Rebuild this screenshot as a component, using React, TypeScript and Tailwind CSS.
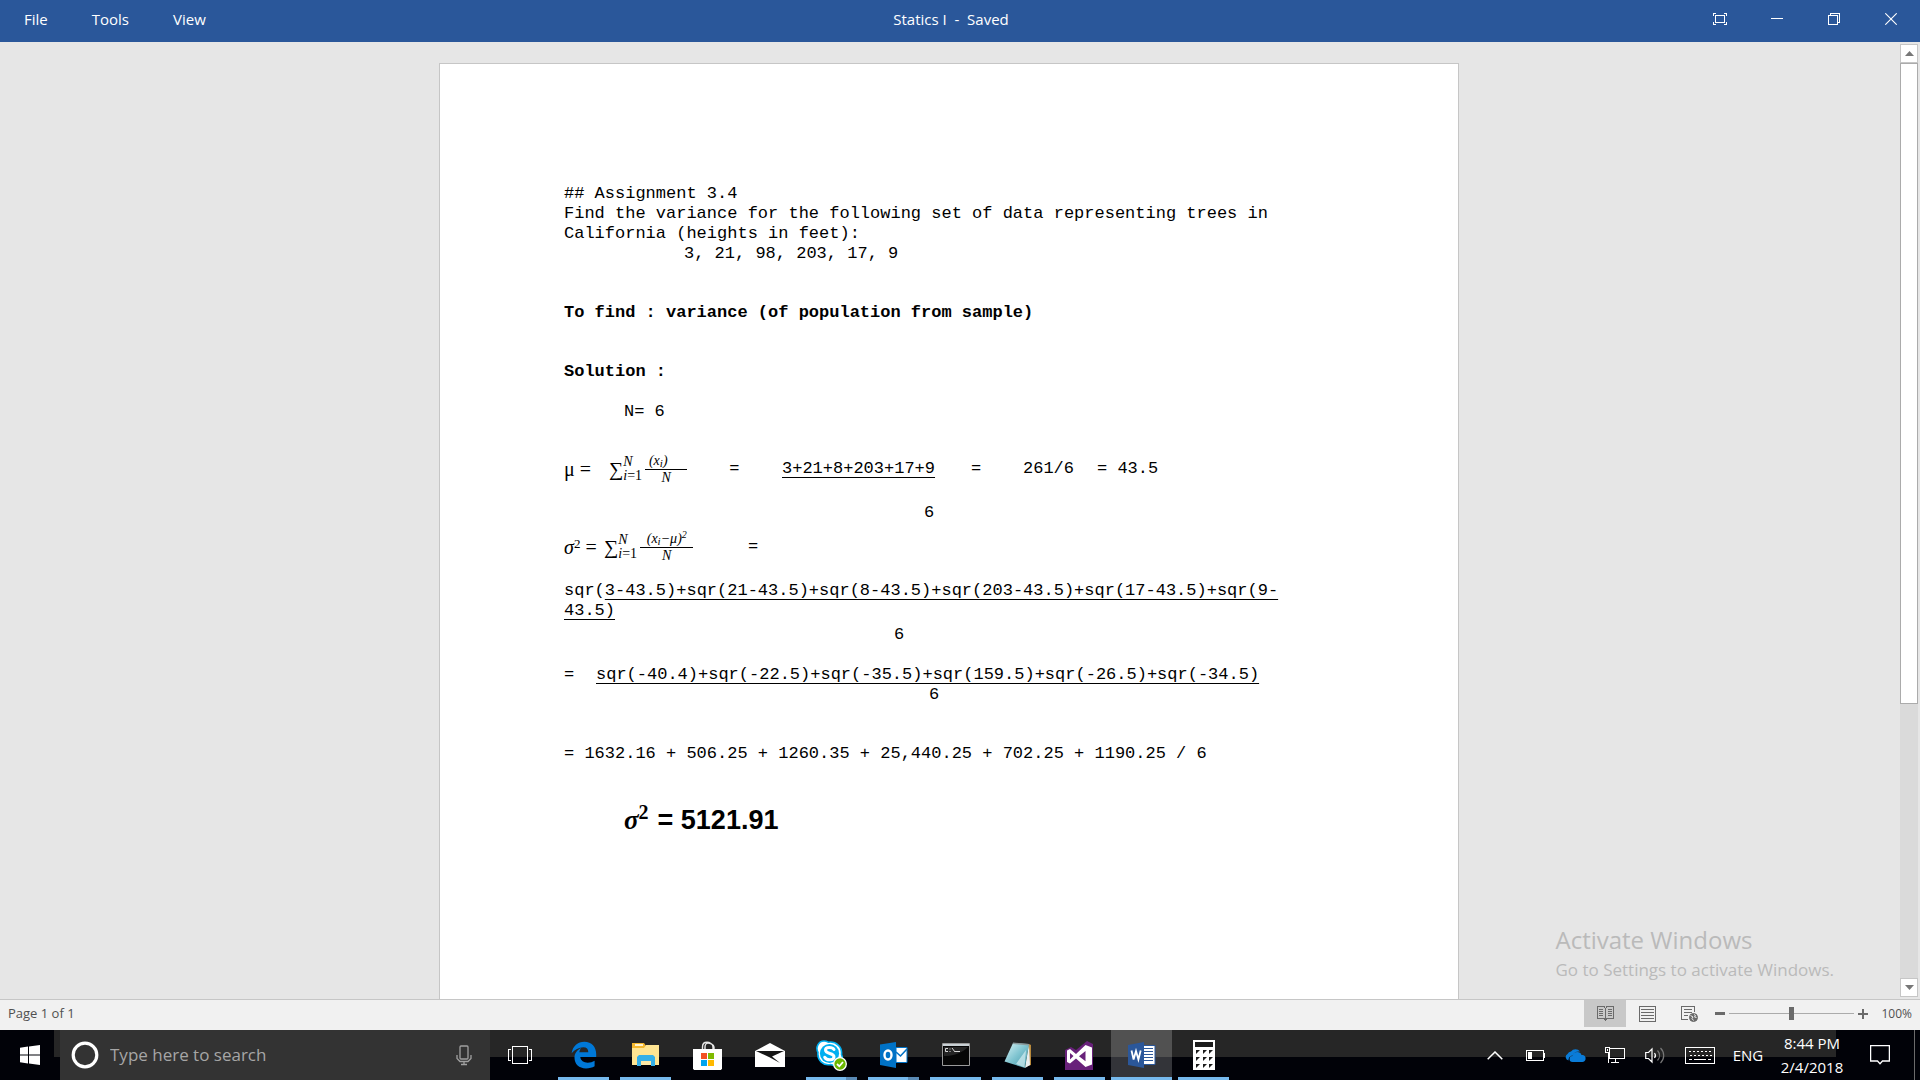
import React from "react";

const mono = "font-['Liberation_Mono',monospace]";
const mathFont = "font-['Liberation_Serif',serif]";

function Caption({ label, children }: { label: string; children: React.ReactNode }) {
  return (
    <button aria-label={label} className="flex h-[38px] w-[57px] items-center justify-center text-white">
      {children}
    </button>
  );
}

function TitleBar() {
  return (
    <header className="grid h-[42px] shrink-0 grid-cols-[1fr_auto_1fr] items-start bg-[#2a579a] text-[15px] leading-5 text-white">
      <nav className="flex gap-11 pt-[9px] pl-6">
        <button>File</button>
        <button>Tools</button>
        <button>View</button>
      </nav>
      <h1 className="pt-[9px] pr-[18px] whitespace-pre">Statics I  -  Saved</h1>
      <div className="flex justify-end pr-px">
        <Caption label="Focus mode">
          <svg width="14" height="12" viewBox="0 0 14 12" fill="none" stroke="currentColor" shapeRendering="crispEdges">
            <path d="M.5 3V.5H3M11 .5h2.500V3M13.500 9v2.500H11M3 11.500H.5V9M2.500 2.500h9v7h-9z" />
          </svg>
        </Caption>
        <Caption label="Minimize">
          <svg width="12" height="12" viewBox="0 0 12 12" fill="currentColor">
            <path d="M0 5h12v1H0z" />
          </svg>
        </Caption>
        <Caption label="Restore">
          <svg width="12" height="12" viewBox="0 0 12 12" fill="none" stroke="currentColor" shapeRendering="crispEdges">
            <path d="M.5 2.500h9v9h-9zM2.500 2V.5h9v9H10" />
          </svg>
        </Caption>
        <Caption label="Close">
          <svg width="12" height="12" viewBox="0 0 12 12" fill="none" stroke="currentColor" strokeWidth="1.100">
            <path d="M.3.3l11.400 11.400M11.700.3L.3 11.700" />
          </svg>
        </Caption>
      </div>
    </header>
  );
}

function SumLimits() {
  return (
    <span className="flex items-center">
      <span className="text-[20px] leading-6">∑</span>
      <span className="flex w-[22px] flex-col text-[14px] leading-[14px]">
        <i>N</i>
        <span>
          <i>i</i>=1
        </span>
      </span>
    </span>
  );
}

function Document() {
  return (
    <article className={`h-full w-[1020px] shrink-0 border border-b-0 border-[#c6c6c6] bg-white pt-[120px] pl-[124px] text-[17px] leading-5 text-black ${mono}`}>
      <p>## Assignment 3.4</p>
      <p>
        Find the variance for the following set of data representing trees in
        <br />
        California (heights in feet):
      </p>
      <p className="pl-[120px]">3, 21, 98, 203, 17, 9</p>
      <h2 className="mt-[39px] font-bold">To find : variance (of population from sample)</h2>
      <h2 className="mt-[39px] font-bold">Solution :</h2>
      <p className="mt-5 pl-[60px]">N= 6</p>

      <div className="mt-[27px] flex h-10 items-center">
        <span className={`flex w-[218px] items-center ${mathFont}`}>
          <span className="w-[45px] text-[20px]">μ =</span>
          <SumLimits />
          <span className="flex flex-col text-center text-[14px] leading-4 italic">
            <span className="w-[42px] border-b border-black pr-4">
              (x<sub className="text-[11px]">i</sub>)
            </span>
            <span>N</span>
          </span>
          <span className={`ml-[42px] text-[17px] ${mono}`}>=</span>
        </span>
        <span className="w-[189px] underline underline-offset-4">3+21+8+203+17+9</span>
        <span className="w-[52px]">=</span>
        <span className="w-[74px]">261/6</span>
        <span className="whitespace-pre">= 43.5</span>
      </div>
      <p className="mt-[14px] pl-[360px]">6</p>

      <div className="mt-1 flex h-10 items-center">
        <span className={`flex w-[184px] items-center ${mathFont}`}>
          <span className="w-10 text-[20px] whitespace-nowrap">
            <i>σ</i>
            <sup className="text-[13px]">2</sup> =
          </span>
          <SumLimits />
          <span className="flex flex-col text-center text-[14px] leading-4 italic">
            <span className="w-[53px] border-b border-black">
              (x<sub className="text-[11px]">i</sub>−μ)<sup className="text-[10px]">2</sup>
            </span>
            <span>N</span>
          </span>
        </span>
        <span>=</span>
      </div>

      <p className="mt-[14px]">
        sqr(<span className="underline underline-offset-4">3-43.5)+sqr(21-43.5)+sqr(8-43.5)+sqr(203-43.5)+sqr(17-43.5)+sqr(9-</span>
        <br />
        <span className="underline underline-offset-4">43.5)</span>
      </p>
      <p className="mt-1 pl-[330px]">6</p>
      <p className="mt-5 flex">
        <span className="w-8">=</span>
        <span className="underline underline-offset-4">sqr(-40.4)+sqr(-22.5)+sqr(-35.5)+sqr(159.5)+sqr(-26.5)+sqr(-34.5)</span>
      </p>
      <p className="pl-[365px]">6</p>
      <p className="mt-[39px]">= 1632.16 + 506.25 + 1260.35 + 25,440.25 + 702.25 + 1190.25 / 6</p>
      <p className="mt-8 flex items-center gap-[9px] pl-[60px] font-['Liberation_Sans',sans-serif] text-[27px] leading-[48px] font-bold">
        <span className={`${mathFont} leading-8`}>
          <i>σ</i>
          <sup className="text-[20px]">2</sup>
        </span>
        = 5121.91
      </p>
    </article>
  );
}

function ScrollBar() {
  return (
    <div className="flex w-5 shrink-0 flex-col pt-0.5 pr-0.5 pb-0.5">
      <button aria-label="Scroll up" className="flex h-[19px] items-center justify-center border border-[#c6c6c6] bg-white">
        <svg width="9" height="5" viewBox="0 0 9 5" fill="#777">
          <path d="M4.500 0L9 5H0z" />
        </svg>
      </button>
      <div className="grow bg-[#dadada]">
        <div className="h-[70%] border border-[#ababab] bg-white" />
      </div>
      <button aria-label="Scroll down" className="flex h-[19px] items-center justify-center border border-[#c6c6c6] bg-white">
        <svg width="9" height="5" viewBox="0 0 9 5" fill="#777">
          <path d="M4.500 5L9 0H0z" />
        </svg>
      </button>
    </div>
  );
}

function StatusBar() {
  return (
    <footer className="flex h-[31px] shrink-0 items-start border-t border-[#c6c6c6] bg-[#f1f1f1] pr-2 text-[12px] text-[#505050]">
      <span className="grow pl-2 text-[13px] leading-[27px]">Page 1 of 1</span>
      <button aria-label="Read mode" className="flex h-[27px] w-[42px] items-center justify-center bg-[#c8c8c8]">
        <svg width="17" height="15" viewBox="0 0 17 15" fill="none" stroke="#6a6a6a" shapeRendering="crispEdges">
          <path d="M8.500 2.500L7 .5H.5v12H7l1.500 2L10 12.500h6.500V.5H10zM8.500 2v12M2 3.500h4M2 5.500h4M2 7.500h4M2 9.500h4M11 3.500h4M11 5.500h4M11 7.500h4M11 9.500h4" />
        </svg>
      </button>
      <button aria-label="Print layout" className="flex h-[27px] w-[42px] items-center justify-center">
        <svg width="17" height="16" viewBox="0 0 17 16" fill="none" stroke="#6a6a6a" shapeRendering="crispEdges">
          <path d="M.5.5h16v15H.5zM2 3.500h13M2 6.500h13M2 9.500h13M2 12.500h13" />
        </svg>
      </button>
      <button aria-label="Web layout" className="flex h-[27px] w-[43px] items-center justify-center">
        <svg width="17" height="16" viewBox="0 0 17 16" fill="none" stroke="#6a6a6a">
          <path d="M7 13.500H.5V.5h13V6M3 3.500h8M3 6.500h8M3 9.500h4" shapeRendering="crispEdges" />
          <circle cx="12.500" cy="11.500" r="4" fill="#6a6a6a" />
          <path d="M9.500 9.500l2.500 1.500-1 1.500 1.500 2M13 8.500l1.500 1-1 1.500 2 .5" stroke="#f1f1f1" />
        </svg>
      </button>
      <div className="flex h-[27px] items-center">
        <button aria-label="Zoom out" className="flex w-[18px] justify-center">
          <svg width="10" height="10" viewBox="0 0 10 10" fill="#6a6a6a">
            <path d="M0 3h10v3H0z" />
          </svg>
        </button>
        <input
          type="range"
          aria-label="Zoom"
          min="0"
          max="200"
          defaultValue="100"
          className="h-[13px] w-[125px] appearance-none bg-[linear-gradient(#ababab,#ababab)] bg-[length:100%_1px] bg-center bg-no-repeat [&::-webkit-slider-thumb]:h-[13px] [&::-webkit-slider-thumb]:w-[5px] [&::-webkit-slider-thumb]:appearance-none [&::-webkit-slider-thumb]:bg-[#6a6a6a]"
        />
        <button aria-label="Zoom in" className="flex w-[18px] justify-center">
          <svg width="10" height="10" viewBox="0 0 10 10" fill="#6a6a6a">
            <path d="M0 4h10v2H0zM4 0h2v10H4z" />
          </svg>
        </button>
        <span className="w-10 text-right">100%</span>
      </div>
    </footer>
  );
}

type AppProps = { label: string; state?: "open" | "stacked" | "active"; children: React.ReactNode };

function TaskApp({ label, state, children }: AppProps) {
  return (
    <button
      aria-label={label}
      className={`flex h-[50px] w-[61px] flex-col items-center ${state === "active" ? "bg-white/20" : ""}`}
    >
      <span className="flex grow items-center pt-[3px]">{children}</span>
      {state === "open" && <span className="h-[3px] w-[51px] bg-[#76b9ed]" />}
      {state === "active" && <span className="h-[3px] w-full bg-[#76b9ed]" />}
      {state === "stacked" && (
        <span className="flex h-[3px] w-[51px]">
          <span className="w-10 bg-[#76b9ed]" />
          <span className="grow bg-[#5a8ab5]" />
        </span>
      )}
      {!state && <span className="h-[3px]" />}
    </button>
  );
}

function Taskbar() {
  return (
    <div className="flex h-[50px] shrink-0 items-center bg-[#010208] bg-[linear-gradient(#262626,#262626)] bg-[length:calc(100%-138px)_27px] bg-[position:54px_0px] bg-no-repeat text-white">
      <button aria-label="Start" className="flex h-[50px] w-[60px] items-center justify-center">
        <svg width="20" height="20" viewBox="0 0 20 20" fill="#fff">
          <path d="M0 2.700L8 1.600V9.500H0zM9 1.400L20 0V9.500H9zM0 10.500H8V18.400L0 17.300zM9 10.500H20V20L9 18.600z" />
        </svg>
      </button>
      <div className="flex h-[50px] w-[430px] items-center bg-[#333] pr-[18px] pl-[11px]">
        <svg width="28" height="28" viewBox="0 0 28 28" fill="none" stroke="#fff" strokeWidth="3.200">
          <circle cx="14" cy="14" r="11.800" />
        </svg>
        <input
          type="text"
          aria-label="Search"
          placeholder="Type here to search"
          className="ml-[11px] min-w-0 grow bg-transparent text-[17px] placeholder:text-[#a6a6a6]"
        />
        <button aria-label="Speak">
          <svg width="16" height="21" viewBox="0 0 16 21" fill="none" stroke="#a0a0a0" strokeWidth="1.300">
            <rect x="4" y="1" width="8" height="13" rx="1" />
            <path d="M1 10v3.500l3 3h8l3-3V10M8 16.500V20M5 19.500h6" />
          </svg>
        </button>
      </div>
      <button aria-label="Task view" className="mr-[3px] flex h-[50px] w-[60px] items-center justify-center">
        <svg width="24" height="18" viewBox="0 0 24 18" fill="none" stroke="#fff" shapeRendering="crispEdges">
          <path d="M4.500.5h15v17h-15zM3 3.500H.5v11H3M21 3.500h2.500v11H21" />
        </svg>
      </button>
      <div className="flex gap-px">
        <TaskApp label="Microsoft Edge" state="open">
          <svg width="26" height="28" viewBox="0 0 26 28" fill="#0078d7">
            <path d="M.6 12.300C1.800 5 6.800.8 13.300.8c7.500 0 11.900 5.400 11.900 12.100v3.200H9.300c.3 3.600 3.500 5.600 7.400 5.600 2.600 0 4.900-.7 6.900-1.900v5.500c-2.300 1.400-5.300 2.100-8.600 2.100-7 0-11.500-4.200-11.500-10.600 0-4.500 2.600-8 6.600-9.800-1 1.200-1.500 2.700-1.700 4.200h8.900c0-3.300-1.600-5-5-5-4.400 0-8.600 2.400-11.700 6.100z" />
          </svg>
        </TaskApp>
        <TaskApp label="File Explorer" state="open">
          <svg width="28" height="26" viewBox="0 0 28 26">
            <path d="M0 1h12l2 3v4H0z" fill="#f5b82e" />
            <path d="M3 2h8v2H3z" fill="#fff3cf" />
            <path d="M0 6h12l2-3h13v20H0z" fill="#ffe592" />
            <path d="M5 24V15l2-2h14l2 2v9h-4v-5H9v5z" fill="#35b0e8" />
            <path d="M9 19h10v4H9z" fill="#ffe9a6" />
          </svg>
        </TaskApp>
        <TaskApp label="Store">
          <svg width="29" height="29" viewBox="0 0 29 29">
            <path d="M9.500 9V6c0-3 2-4.700 4.500-4.700S20 3 20 6v3M12 9V6c0-3 2-4 3-4s6 1 6 4v3" fill="none" stroke="#e8e8e8" strokeWidth="1.400" />
            <path d="M0 8h29v19.500L28 29H1L0 27.500z" fill="#fff" />
            <path d="M8 12h6v6H8z" fill="#f25022" />
            <path d="M15 12h6v6h-6z" fill="#7fba00" />
            <path d="M8 19h6v6H8z" fill="#00a4ef" />
            <path d="M15 19h6v6h-6z" fill="#ffb900" />
          </svg>
        </TaskApp>
        <TaskApp label="Mail">
          <svg width="30" height="24" viewBox="0 0 30 24">
            <path d="M0 8L15 0l15 8v16H0z" fill="#fff" />
            <path d="M1 8h28l-12 5.500 8 6.500L14 14z" fill="#161616" />
          </svg>
        </TaskApp>
        <TaskApp label="Skype" state="stacked">
          <svg width="31" height="31" viewBox="0 0 31 31">
            <path d="M8 1c2 0 3 .4 4.500 1.200C20 1 26.500 7 25.500 14.500c2.500 5-1 11-6.500 11-2 0-3-.5-4.500-1C7 26 1 20 2 12.500-.8 7.500 2.500 1 8 1z" fill="#fff" stroke="#00aff0" strokeWidth="1.600" />
            <circle cx="13.500" cy="13.500" r="9.600" fill="#00aff0" />
            <path d="M18 9.500c-1.500-2.500-8.500-3-8.500.5 0 4.500 8.500 2.500 8.500 6.800 0 4-7.500 4-9.300.5" fill="none" stroke="#fff" strokeWidth="3" strokeLinecap="round" />
            <circle cx="24" cy="24" r="6.300" fill="#6bb700" stroke="#fff" strokeWidth="1.300" />
            <path d="M21 24l2.300 2.300L27 22" fill="none" stroke="#fff" strokeWidth="1.800" />
          </svg>
        </TaskApp>
        <TaskApp label="Outlook" state="stacked">
          <svg width="28" height="28" viewBox="0 0 28 28">
            <path d="M16 6.500h11v15H16z" fill="#fff" stroke="#0072c6" />
            <path d="M16 11l4.500 4L27 8" fill="none" stroke="#0072c6" strokeWidth="1.600" />
            <path d="M0 3.500L16 1v26L0 24z" fill="#0072c6" />
            <ellipse cx="8" cy="14" rx="3.500" ry="4.500" fill="none" stroke="#fff" strokeWidth="2.400" />
          </svg>
        </TaskApp>
        <TaskApp label="Command Prompt" state="open">
          <svg width="28" height="24" viewBox="0 0 28 24">
            <path d="M.5.5h27v22H.5z" fill="#060606" stroke="#9a9a9a" />
            <path d="M1 1h26v2H1z" fill="#c9d0d4" />
            <path d="M2 13V4h24C18 12 8 13 2 13z" fill="#252525" />
            <path d="M6 5.500H3.500v3H6M8 5.500v1M8 8v1M10 5l3 4M13 8.500h5" fill="none" stroke="#d8d8d8" />
          </svg>
        </TaskApp>
        <TaskApp label="Notepad" state="open">
          <svg width="28" height="28" viewBox="0 0 28 28">
            <defs>
              <linearGradient id="pad" x1="0" y1="0" x2="1" y2="1">
                <stop offset="0" stopColor="#d9f3f6" />
                <stop offset=".5" stopColor="#7fc4d0" />
                <stop offset="1" stopColor="#3f93a6" />
              </linearGradient>
            </defs>
            <path d="M25 3l2 1v20l-6 2z" fill="#b98a3c" />
            <path d="M25 3l-4 24 5-3z" fill="#e9eef0" />
            <path d="M9 2l16 1-4 24L.5 20.500z" fill="url(#pad)" />
            <path d="M12 23L22 9l-1.500 17.500z" fill="#dff5f7" opacity=".65" />
            <path d="M9 1.500l16 1.500v1.500L9 3z" fill="#8a9a9c" />
          </svg>
        </TaskApp>
        <TaskApp label="Visual Studio" state="open">
          <svg width="29" height="31" viewBox="0 0 29 31">
            <path d="M0 10l6-3 5 3L22 1l6 3v26H0z" fill="#68217a" />
            <path d="M2 10.500l3-1.500 6 5 9.500-9L27 7.500v17L20.500 27 11 18.500l-6 5-3-1.500zM5 13v6.500L8.500 16zM20.500 11L14 16.200l6.500 5z" fill="#fff" fillRule="evenodd" />
          </svg>
        </TaskApp>
        <TaskApp label="Word" state="active">
          <svg width="28" height="28" viewBox="0 0 28 28">
            <path d="M15 4.500h12v19H15z" fill="#fff" stroke="#2b579a" />
            <path d="M16 7.500h9M16 10.500h9M16 13.500h9M16 16.500h9M16 19.500h9" stroke="#2b579a" strokeWidth="1.200" />
            <path d="M0 4L16 1v26L0 24z" fill="#2b579a" />
            <path d="M3.500 9.500L5.600 18.500 8 10l2.400 8.500 2.300-9" fill="none" stroke="#fff" strokeWidth="1.800" />
          </svg>
        </TaskApp>
        <TaskApp label="Calculator" state="open">
          <svg width="22" height="30" viewBox="0 0 22 30">
            <path d="M0 0h22v30H0z" fill="#fff" />
            <path d="M2 2h18v5H2zM3 10h4l-4 4zM10 10h4l-4 4zM16 10h4l-4 4zM3 17h4l-4 4zM10 17h4l-4 4zM16 17h4l-4 4zM3 24h4l-4 4zM10 24h4l-4 4zM16 24h4l-4 4z" fill="#1c1c1c" />
          </svg>
        </TaskApp>
      </div>

      <div className="ml-auto flex h-[50px] items-center">
        <button aria-label="Show hidden icons" className="flex w-10 justify-center">
          <svg width="16" height="9" viewBox="0 0 16 9" fill="none" stroke="#fff" strokeWidth="1.500">
            <path d="M.7 8.300L8 1l7.300 7.300" />
          </svg>
        </button>
        <button aria-label="Battery" className="flex w-10 justify-center">
          <svg width="19" height="11" viewBox="0 0 19 11" shapeRendering="crispEdges">
            <path d="M.5.5h17v10H.5zM18.500 3v5" fill="none" stroke="#fff" />
            <path d="M2 2h4v7H2z" fill="#fff" />
          </svg>
        </button>
        <button aria-label="OneDrive" className="flex w-10 justify-center">
          <svg width="21" height="13" viewBox="0 0 21 13" fill="#0a7cd8">
            <path d="M3.500 11.500A3.500 3.500 0 0 1 2.500 5 5 5 0 0 1 6 2.500 5.500 5.500 0 0 1 15 2.500C11 2 8.500 4 8 6.500 5 6.500 3.500 9 3.500 11.500z" />
            <path d="M7.500 13a3 3 0 0 1 0-6c.5-4.500 7.500-5.500 9-1 3.500 0 4.500 2 4 4.500-.5 1.500-1.500 2.500-3 2.500z" />
          </svg>
        </button>
        <button aria-label="Network" className="flex w-10 justify-center">
          <svg width="20" height="17" viewBox="0 0 20 17" fill="none" stroke="#fff" shapeRendering="crispEdges">
            <path d="M5 1.500h14.500v10H4.500V6M.5.5h4v5h-4zM2.500 2v2M3.500 6v9.500M6 15.500h8M10.500 12v3" />
          </svg>
        </button>
        <button aria-label="Volume" className="flex w-10 justify-center">
          <svg width="20" height="17" viewBox="0 0 20 17" fill="none" stroke="#fff" strokeWidth="1.200">
            <path d="M.7 5.500h2.800L7 2v13l-3.500-3.500H.7zM9.500 6c1.200 1.500 1.200 3.500 0 5" />
            <path d="M12.500 3.500c2.700 3 2.700 7 0 10M15.500 1c4.300 4.500 4.300 10.500 0 15" stroke="#777" />
          </svg>
        </button>
        <button aria-label="Touch keyboard" className="flex w-[50px] justify-center">
          <svg width="30" height="17" viewBox="0 0 30 17" fill="none" stroke="#fff" shapeRendering="crispEdges">
            <path d="M.5.5h29v16H.5z" />
            <path d="M4 4.500h22M5 8.500h22" strokeDasharray="2 2" />
            <path d="M4 12.500h3M9 12.500h12M23 12.500h3" />
          </svg>
        </button>
        <button className="w-[46px] text-center text-[15px]">ENG</button>
        <div className="w-[82px] text-center text-[15px] leading-6">
          <time dateTime="2018-02-04T20:44" className="block">8:44 PM</time>
          <time dateTime="2018-02-04" className="block">2/4/2018</time>
        </div>
        <button aria-label="Action center" className="flex h-[50px] w-[62px] items-center justify-center border-r border-[#6b6b6b] pr-2">
          <svg width="20" height="20" viewBox="0 0 20 20" fill="none" stroke="#fff" strokeWidth="1.300">
            <path d="M.6.6h18.800v15.400H12.500L10 18.800 7.500 16H.6z" />
          </svg>
        </button>
        <div className="w-[5px]" />
      </div>
    </div>
  );
}

export default function App() {
  return (
    <div className="flex h-screen flex-col overflow-hidden bg-[#e6e6e6] font-['Open_Sans',sans-serif]">
      <TitleBar />
      <main className="relative flex min-h-0 grow">
        <div className="flex min-w-0 grow justify-center overflow-hidden pt-[21px] pr-0.5">
          <Document />
        </div>
        <ScrollBar />
        <aside className="pointer-events-none absolute right-[86px] bottom-[15px] text-[#bababa]">
          <p className="text-[24px] leading-8">Activate Windows</p>
          <p className="text-[17px] leading-7">Go to Settings to activate Windows.</p>
        </aside>
      </main>
      <StatusBar />
      <Taskbar />
    </div>
  );
}
